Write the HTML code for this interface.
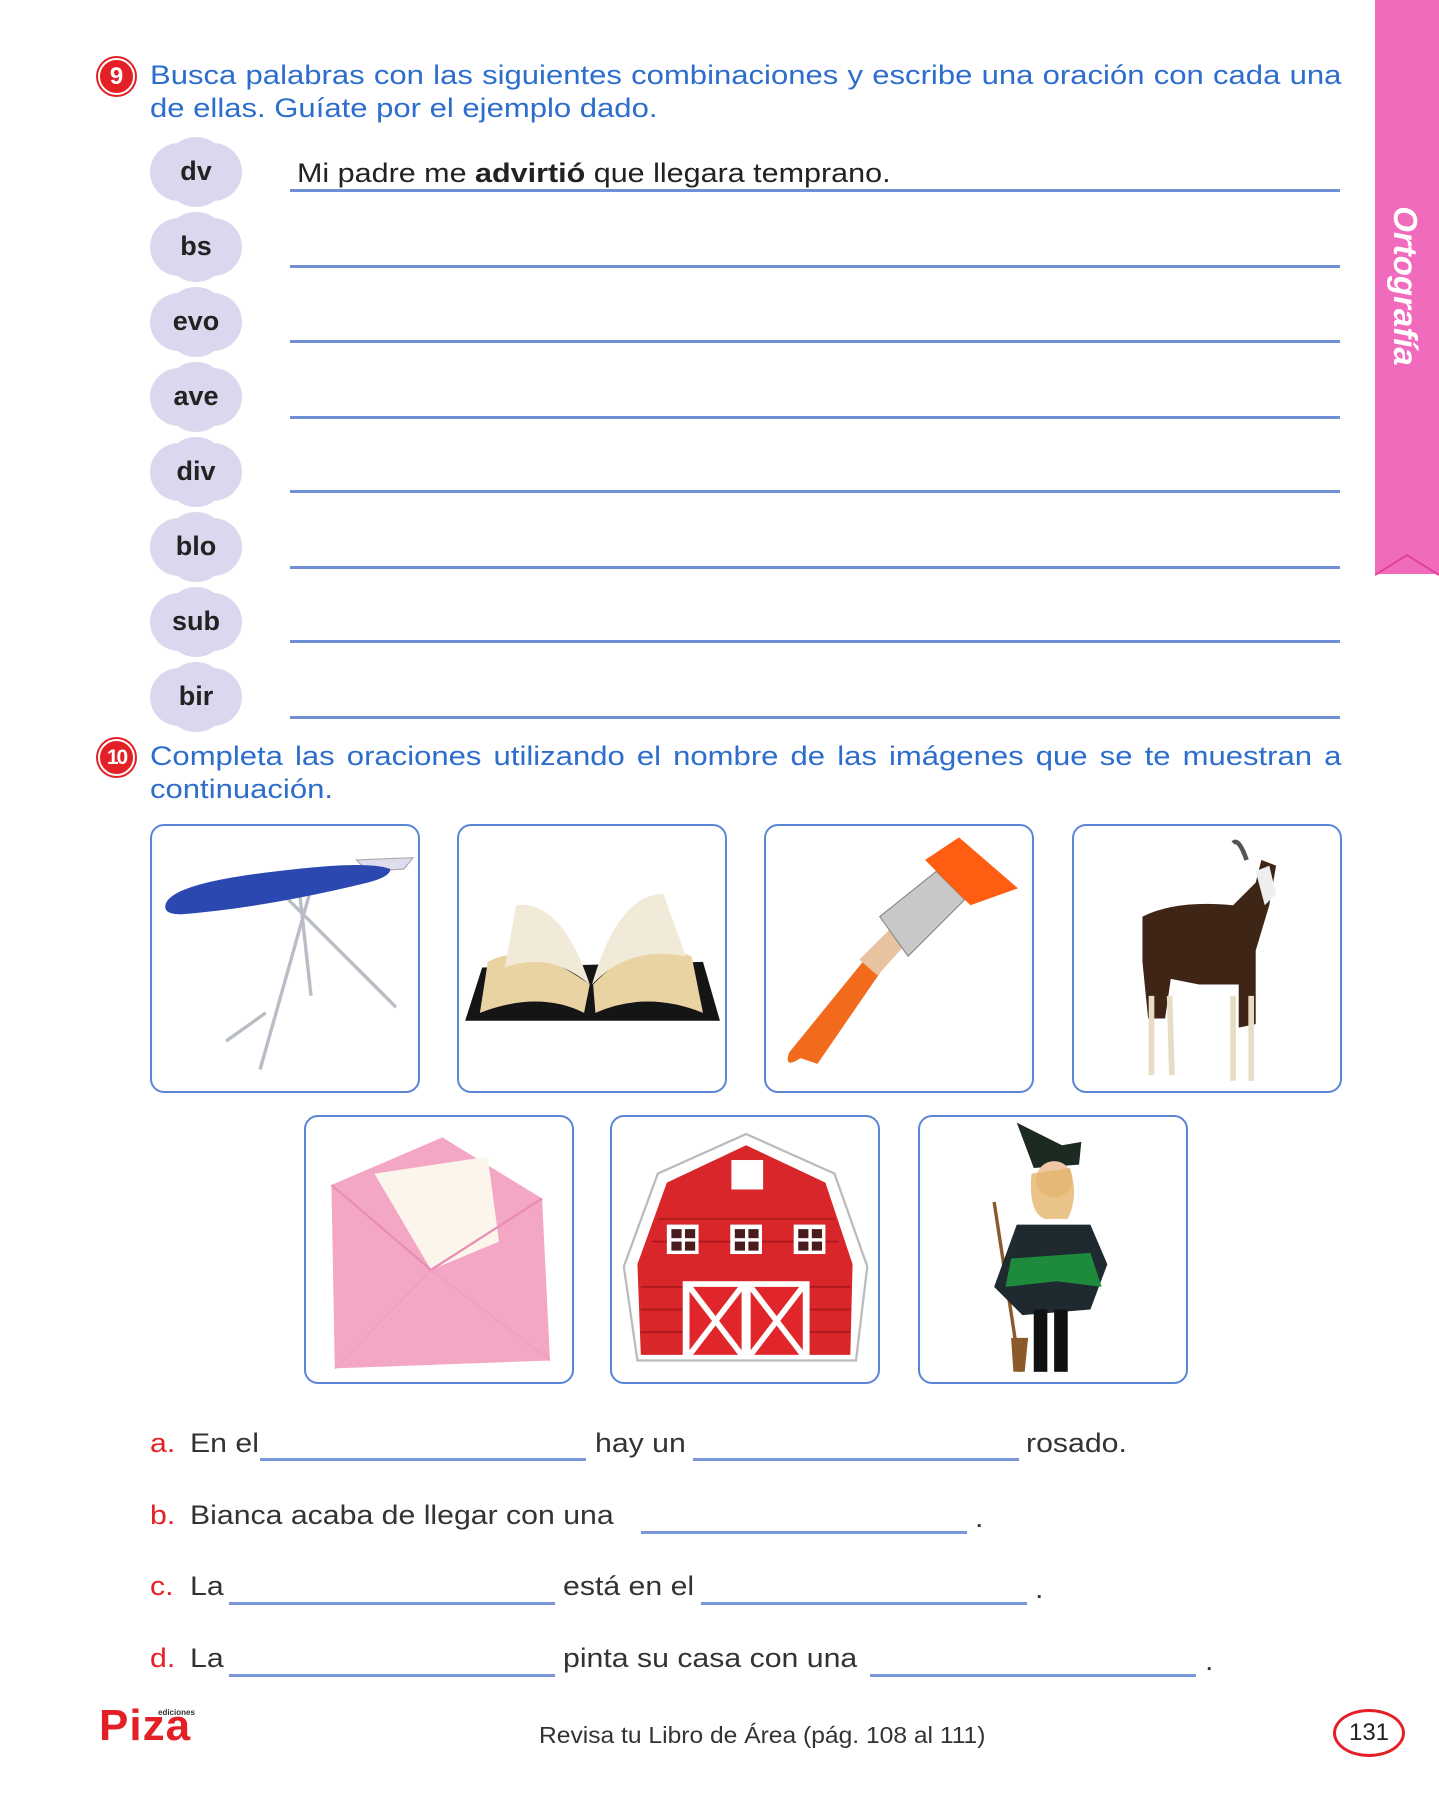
<!DOCTYPE html>
<html><head><meta charset="utf-8"><style>
*{margin:0;padding:0;box-sizing:border-box}
body{width:1439px;height:1800px;background:#fff;position:relative;overflow:hidden;font-family:"Liberation Sans",sans-serif;}
.a{position:absolute}
.h{color:#2d6dcc;font-size:27px;line-height:33px;left:150px;white-space:nowrap;transform:scaleX(1.15);transform-origin:0 0}
.j{width:1036px;text-align:justify;text-align-last:justify;white-space:normal}
.num{position:absolute;width:37px;height:37px;border-radius:50%;background:#e42027;border:2px solid #fff;box-shadow:0 0 0 2px #e42027;color:#fff;font-weight:bold;font-size:24px;text-align:center;line-height:33px}
.cloud{position:absolute;left:150px;width:92px;height:58px;background:#dcd7ee;border-radius:29px;text-align:center;font-weight:bold;font-size:27px;line-height:56px;color:#222}
.cloud:before,.cloud:after{content:"";position:absolute;width:40px;height:22px;background:#dcd7ee;border-radius:50%;left:26px}
.cloud:before{top:-6px}.cloud:after{bottom:-6px}
.cloud span{position:relative;z-index:1}
.ln{position:absolute;left:290px;width:1050px;height:3px;background:#6f8fd6}
.box{position:absolute;width:270px;height:269px;border:2px solid #5b86d6;border-radius:14px;overflow:hidden}
.box svg{width:100%;height:100%}
.s{position:absolute;font-size:27px;color:#333;white-space:nowrap;transform:scaleX(1.12);transform-origin:0 0}
.lb{position:absolute;left:150px;font-size:27px;color:#e42027;transform:scaleX(1.12);transform-origin:0 0}
.bl{position:absolute;height:3px;background:#7a97da}
</style></head><body>

<div class="a" style="left:1375px;top:0;width:64px;height:574px;background:#f06bbb"></div>
<svg class="a" style="left:1375px;top:545px" width="64" height="40"><polygon points="0,30 32,10 64,30 64,0 0,0" fill="#f06bbb"/><polyline points="0,30 32,10 64,30" fill="none" stroke="#e0409a" stroke-width="2"/></svg>
<div class="a" style="left:1405px;top:286px;transform:translate(-50%,-50%) rotate(90deg);color:#fff;font-weight:bold;font-style:italic;font-size:33px;white-space:nowrap">Ortografía</div>

<div class="num" style="left:98px;top:58px">9</div>
<div class="a h j" style="top:59px">Busca palabras con las siguientes combinaciones y escribe una oración con cada una</div>
<div class="a h" style="top:92px">de ellas. Guíate por el ejemplo dado.</div>

<div class="cloud" style="top:143px"><span>dv</span></div>
<div class="cloud" style="top:218px"><span>bs</span></div>
<div class="cloud" style="top:293px"><span>evo</span></div>
<div class="cloud" style="top:368px"><span>ave</span></div>
<div class="cloud" style="top:443px"><span>div</span></div>
<div class="cloud" style="top:518px"><span>blo</span></div>
<div class="cloud" style="top:593px"><span>sub</span></div>
<div class="cloud" style="top:668px"><span>bir</span></div>

<div class="a" style="left:297px;top:158px;font-size:27px;color:#222;white-space:nowrap;transform:scaleX(1.13);transform-origin:0 0">Mi padre me <b>advirtió</b> que llegara temprano.</div>
<div class="ln" style="top:189px"></div>
<div class="ln" style="top:265px"></div>
<div class="ln" style="top:340px"></div>
<div class="ln" style="top:416px"></div>
<div class="ln" style="top:490px"></div>
<div class="ln" style="top:566px"></div>
<div class="ln" style="top:640px"></div>
<div class="ln" style="top:716px"></div>

<div class="num" style="left:98px;top:739px;font-size:21px;letter-spacing:-2px">10</div>
<div class="a h j" style="top:740px">Completa las oraciones utilizando el nombre de las imágenes que se te muestran a</div>
<div class="a h" style="top:773px">continuación.</div>

<div class="box" style="left:150px;top:824px"><svg viewBox="0 0 234 234">
<g stroke="#b9bec6" stroke-width="3" fill="none"><line x1="140" y1="55" x2="95" y2="215"/><line x1="110" y1="55" x2="215" y2="160"/><line x1="65" y1="190" x2="100" y2="165"/><line x1="130" y1="60" x2="140" y2="150"/></g>
<polygon points="180,30 230,28 222,38 190,40" fill="#dde" stroke="#aaa"/>
<path d="M12 68 Q20 50 110 40 Q190 30 210 38 Q210 45 190 50 Q100 72 25 78 Q8 78 12 68Z" fill="#2a48b0"/>
</svg></div>

<div class="box" style="left:457px;top:824px"><svg viewBox="0 0 234 234">
<polygon points="5,172 230,172 215,120 20,125" fill="#151515"/>
<path d="M25 120 Q60 100 115 140 L110 165 Q70 145 18 165Z" fill="#e9d3a2"/>
<path d="M205 115 Q160 95 118 140 L120 165 Q165 145 215 165Z" fill="#e9d3a2"/>
<path d="M50 70 Q90 65 115 140 Q80 110 40 125Z" fill="#f2ead8"/>
<path d="M180 60 Q140 60 117 140 Q150 105 200 115Z" fill="#f2ead8"/>
</svg></div>

<div class="box" style="left:764px;top:824px"><svg viewBox="0 0 234 234">
<path d="M30 205 Q15 215 20 200 L85 120 L100 130 L45 210Z" fill="#f26a1b"/>
<polygon points="82,118 110,90 125,102 98,132" fill="#e8c3a0"/>
<polygon points="100,80 150,40 175,65 125,115" fill="#c8c8c8" stroke="#888"/>
<path d="M140 30 L170 10 L222 55 L180 70Z" fill="#ff5d12"/>
</svg></div>

<div class="box" style="left:1072px;top:824px"><svg viewBox="0 0 234 234">
<path d="M60 80 Q90 65 140 70 L160 50 L165 30 L178 35 L172 70 L160 110 L160 175 L145 178 L145 140 L110 140 L85 135 L80 170 L65 170 L60 120Z" fill="#3e2516"/>
<g stroke="#e8dcc4" stroke-width="5"><line x1="68" y1="150" x2="68" y2="220"/><line x1="84" y1="150" x2="86" y2="220"/><line x1="140" y1="150" x2="140" y2="225"/><line x1="156" y1="150" x2="156" y2="225"/></g>
<path d="M140 15 Q145 10 152 30" stroke="#555" stroke-width="4" fill="none"/>
<path d="M160 40 L172 35 L178 60 L168 70Z" fill="#eee"/>
</svg></div>

<div class="box" style="left:304px;top:1115px"><svg viewBox="0 0 234 234">
<polygon points="22,60 120,18 208,72 215,215 25,222" fill="#f4a6c5"/>
<polygon points="60,50 160,35 170,110 110,135" fill="#fbf5ec"/>
<path d="M22 60 L110 135 L208 72" stroke="#e98db2" stroke-width="2" fill="none"/>
<path d="M25 222 L110 135 L215 215" stroke="#ef9fc0" stroke-width="1.5" fill="none"/>
</svg></div>

<div class="box" style="left:610px;top:1115px"><svg viewBox="0 0 234 234">
<polygon points="10,132 40,50 118,15 196,50 225,132 215,215 22,215" fill="#fff" stroke="#bbb" stroke-width="2"/>
<polygon points="22,130 48,58 118,25 188,58 212,130 210,210 25,210" fill="#d8262a"/>
<g stroke="#a8181c" stroke-width="1.5"><line x1="25" y1="150" x2="210" y2="150"/><line x1="25" y1="170" x2="210" y2="170"/><line x1="25" y1="190" x2="210" y2="190"/><line x1="40" y1="90" x2="196" y2="90"/><line x1="35" y1="110" x2="200" y2="110"/></g>
<rect x="62" y="145" width="112" height="67" fill="#fff"/>
<rect x="68" y="150" width="46" height="60" fill="#e0262b"/><rect x="122" y="150" width="46" height="60" fill="#e0262b"/>
<g stroke="#fff" stroke-width="5"><line x1="68" y1="150" x2="114" y2="210"/><line x1="114" y1="150" x2="68" y2="210"/><line x1="122" y1="150" x2="168" y2="210"/><line x1="168" y1="150" x2="122" y2="210"/></g>
<g fill="#fff"><rect x="48" y="95" width="28" height="26"/><rect x="104" y="95" width="28" height="26"/><rect x="160" y="95" width="28" height="26"/><rect x="105" y="38" width="28" height="26"/></g>
<g fill="#4a1c1c"><rect x="52" y="99" width="9" height="8"/><rect x="64" y="99" width="9" height="8"/><rect x="52" y="110" width="9" height="8"/><rect x="64" y="110" width="9" height="8"/><rect x="108" y="99" width="9" height="8"/><rect x="120" y="99" width="9" height="8"/><rect x="108" y="110" width="9" height="8"/><rect x="120" y="110" width="9" height="8"/><rect x="164" y="99" width="9" height="8"/><rect x="176" y="99" width="9" height="8"/><rect x="164" y="110" width="9" height="8"/><rect x="176" y="110" width="9" height="8"/></g>
</svg></div>

<div class="box" style="left:918px;top:1115px"><svg viewBox="0 0 234 234">
<line x1="65" y1="75" x2="88" y2="225" stroke="#8a5a2a" stroke-width="3"/>
<path d="M80 195 L95 195 L92 225 L82 225Z" fill="#8a5a2a"/>
<polygon points="85,5 125,25 142,22 140,42 100,45" fill="#1d2a22"/>
<circle cx="118" cy="55" r="16" fill="#f0c7a6"/>
<path d="M98 50 Q95 85 110 90 L130 90 Q140 70 132 45Z" fill="#e3b46a" opacity="0.8"/>
<path d="M85 95 L150 95 L165 130 L150 170 L90 175 L65 150Z" fill="#1f2a30"/>
<path d="M80 125 L150 120 L160 150 L120 145 L75 150Z" fill="#1e8a3c"/>
<rect x="100" y="170" width="12" height="55" fill="#111"/><rect x="118" y="170" width="12" height="55" fill="#111"/>
</svg></div>

<div class="lb" style="top:1428px">a.</div>
<div class="s" style="left:190px;top:1428px">En el</div>
<div class="bl" style="left:260px;top:1458px;width:326px"></div>
<div class="s" style="left:595px;top:1428px">hay un</div>
<div class="bl" style="left:693px;top:1458px;width:326px"></div>
<div class="s" style="left:1026px;top:1428px">rosado.</div>

<div class="lb" style="top:1500px">b.</div>
<div class="s" style="left:190px;top:1500px">Bianca acaba de llegar con una</div>
<div class="bl" style="left:641px;top:1531px;width:326px"></div>
<div class="s" style="left:975px;top:1503px">.</div>

<div class="lb" style="top:1571px">c.</div>
<div class="s" style="left:190px;top:1571px">La</div>
<div class="bl" style="left:229px;top:1602px;width:326px"></div>
<div class="s" style="left:563px;top:1571px">está en el</div>
<div class="bl" style="left:701px;top:1602px;width:326px"></div>
<div class="s" style="left:1035px;top:1574px">.</div>

<div class="lb" style="top:1643px">d.</div>
<div class="s" style="left:190px;top:1643px">La</div>
<div class="bl" style="left:229px;top:1674px;width:326px"></div>
<div class="s" style="left:563px;top:1643px">pinta su casa con una</div>
<div class="bl" style="left:870px;top:1674px;width:326px"></div>
<div class="s" style="left:1205px;top:1646px">.</div>

<div class="a" style="left:99px;top:1704px;font-weight:bold;font-size:44px;color:#e42027;letter-spacing:1px;line-height:44px">Piza</div>
<div class="a" style="left:158px;top:1708px;font-size:8px;font-weight:bold;color:#333">ediciones</div>
<div class="a" style="left:539px;top:1722px;font-size:23px;color:#333;white-space:nowrap;transform:scaleX(1.07);transform-origin:0 0">Revisa tu Libro de Área (pág. 108 al 111)</div>
<div class="a" style="left:1333px;top:1709px;width:72px;height:48px;border:3px solid #e42027;border-radius:50%;text-align:center;line-height:42px;font-size:24px;color:#222">131</div>
</body></html>
